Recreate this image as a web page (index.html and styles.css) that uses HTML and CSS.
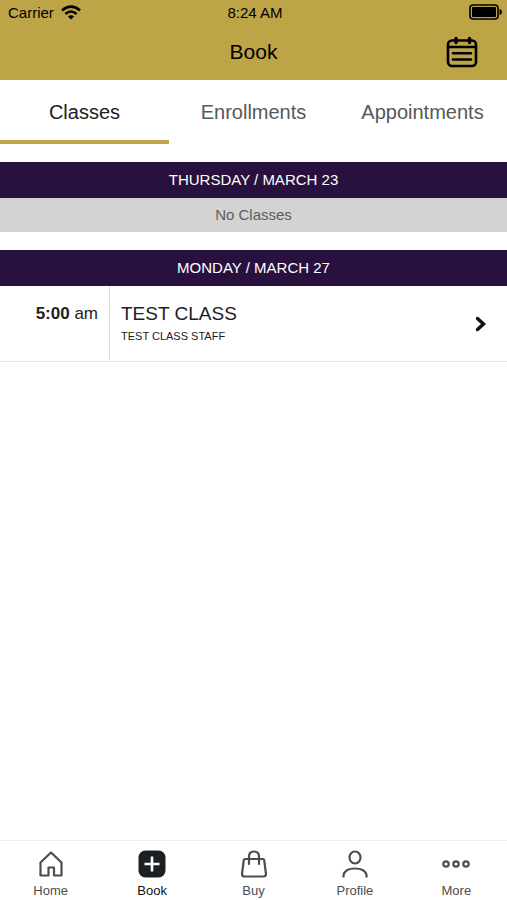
FILE: index.html
```html
<!DOCTYPE html>
<html lang="en">
<head>
    <meta charset="UTF-8">
    <meta name="viewport" content="width=device-width, initial-scale=1">
    <title>Book</title>
    <link rel="stylesheet" href="styles.css">
</head>
<body>
<header class="header">
    <div class="status-bar">
        <div class="status-left">
            <span>Carrier</span>
            <svg width="20" height="15" viewBox="0 0 20 15" fill="none" stroke="#000" stroke-width="2.6">
                <path d="M1 5.4 Q10 -2.2 19 5.4"/>
                <path d="M4.4 9 Q10 4 15.6 9"/>
                <path d="M10 14.6 L6.9 11.5 Q10 9 13.1 11.5 Z" fill="#000" stroke="none"/>
            </svg>
        </div>
        <span>8:24 AM</span>
        <div class="status-right">
            <svg width="33" height="16" viewBox="0 0 33 16">
                <rect x="1" y="1" width="28" height="14" rx="3" fill="none" stroke="#000" stroke-width="1.6"/>
                <rect x="3" y="3" width="24" height="10" rx="1" fill="#000"/>
                <path d="M30.5 5 Q33 5.5 33 8 Q33 10.5 30.5 11 Z" fill="#000"/>
            </svg>
        </div>
    </div>
    <div class="title-bar">
        <h1>Book</h1>
        <button type="button" class="calendar-btn" aria-label="Calendar">
            <svg width="32" height="32" viewBox="0 0 32 32" fill="none" stroke="#000" stroke-width="2.6" stroke-linecap="round">
                <rect x="2" y="4.5" width="28" height="25.5" rx="4"/>
                <path d="M2.5 11 H29.5 M7 17.3 H25 M7 23.5 H25"/>
                <path d="M10 2.5 V6.5 M23.5 2.5 V6.5" stroke-width="3.4"/>
            </svg>
        </button>
    </div>
</header>

<nav class="tabs">
    <a href="#classes" class="tab active">Classes</a>
    <a href="#enrollments" class="tab">Enrollments</a>
    <a href="#appointments" class="tab">Appointments</a>
</nav>

<main class="schedule">
    <section class="day">
        <h2 class="day-title">THURSDAY / MARCH 23</h2>
        <p class="day-empty">No Classes</p>
    </section>
    <section class="day">
        <h2 class="day-title">MONDAY / MARCH 27</h2>
        <a href="#class" class="class-row">
            <span class="class-time"><b>5:00</b> am</span>
            <span class="class-info">
                <span class="class-name">TEST CLASS</span>
                <span class="class-staff">TEST CLASS STAFF</span>
            </span>
            <svg class="arrow" width="12" height="16" viewBox="0 0 12 16" fill="none" stroke="#111" stroke-width="3.4" stroke-linecap="round">
                <path d="M2.5 2.5 L8.5 8 L2.5 13.5"/>
            </svg>
        </a>
    </section>
</main>

<nav class="bottom-nav">
    <a href="#home" class="nav-item">
        <svg width="28" height="28" viewBox="0 0 28 28" fill="none" stroke="#4a4d51" stroke-width="2.2" stroke-linejoin="round">
            <path d="M3.5 12.5 L14 2.5 L24.5 12.5 V25.5 H17 V17.5 H11.5 V25.5 H3.5 Z"/>
        </svg>
        <span>Home</span>
    </a>
    <a href="#book" class="nav-item active">
        <svg width="28" height="28" viewBox="0 0 28 28">
            <rect x="0.5" y="0.5" width="27" height="27" rx="7" fill="#1d2023"/>
            <path d="M14 6.5 V21.5 M6.5 14 H21.5" stroke="#fff" stroke-width="2.6"/>
        </svg>
        <span>Book</span>
    </a>
    <a href="#buy" class="nav-item">
        <svg width="28" height="28" viewBox="0 0 28 28" fill="none" stroke="#4a4d51" stroke-width="2.2" stroke-linecap="round" stroke-linejoin="round">
            <path d="M5 9 H23 Q24 9 24.2 10 L26 24 Q26 26.5 23.5 26.5 H4.5 Q2 26.5 2 24 L3.8 10 Q4 9 5 9 Z"/>
            <path d="M9 14 V6.5 Q9 1.5 14 1.5 Q19 1.5 19 6.5 V14"/>
        </svg>
        <span>Buy</span>
    </a>
    <a href="#profile" class="nav-item">
        <svg width="28" height="28" viewBox="0 0 28 28" fill="none" stroke="#4a4d51" stroke-width="2.2">
            <ellipse cx="14" cy="7.5" rx="5.5" ry="6"/>
            <path d="M2.5 27.5 V25 Q4 18.5 14 18.5 Q24 18.5 25.5 25 V27.5"/>
        </svg>
        <span>Profile</span>
    </a>
    <a href="#more" class="nav-item">
        <svg width="28" height="28" viewBox="0 0 28 28" fill="none" stroke="#4a4d51" stroke-width="2.2">
            <circle cx="4" cy="14" r="2.7"/>
            <circle cx="14" cy="14" r="2.7"/>
            <circle cx="24" cy="14" r="2.7"/>
        </svg>
        <span>More</span>
    </a>
</nav>
</body>
</html>
```
FILE: styles.css
```css
* {
    box-sizing: border-box;
}
body {
    margin: 0;
    min-height: 100vh;
    display: flex;
    flex-direction: column;
    background: #fff;
    color: #1d2023;
    font-family: "Liberation Sans", Arial, sans-serif;
}
h1, h2, p {
    margin: 0;
    font-weight: normal;
}
a {
    color: inherit;
    text-decoration: none;
}
svg {
    display: block;
}

/* header */
.header {
    background: #bda446;
    color: #000;
}
.status-bar {
    display: grid;
    grid-template-columns: 1fr auto 1fr;
    align-items: center;
    height: 24px;
    padding: 0 5px 0 8px;
    font-size: 15px;
}
.status-left {
    display: flex;
    align-items: center;
    gap: 7px;
}
.status-right {
    display: flex;
    justify-content: flex-end;
}
.title-bar {
    display: grid;
    grid-template-columns: 1fr auto 1fr;
    align-items: center;
    height: 56px;
    padding: 0 29px;
}
.title-bar h1 {
    grid-column: 2;
    font-size: 21px;
}
.calendar-btn {
    justify-self: end;
    padding: 0;
    border: 0;
    background: none;
    cursor: pointer;
}

/* tabs */
.tabs {
    display: flex;
}
.tab {
    flex: 1;
    border-bottom: 4px solid transparent;
    padding-top: 4px;
    line-height: 56px;
    text-align: center;
    font-size: 20px;
    color: #55585c;
}
.tab.active {
    border-color: #bda446;
    color: #1d2023;
}

/* schedule */
.schedule {
    flex: 1;
}
.day {
    margin-top: 18px;
}
.day-title {
    background: #28113e;
    color: #fff;
    line-height: 36px;
    text-align: center;
    font-size: 15px;
}
.day-empty {
    background: #d3d3d3;
    color: #5c5c5c;
    line-height: 34px;
    text-align: center;
    font-size: 15px;
}
.class-row {
    display: flex;
    padding-right: 20px;
    border-bottom: 1px solid #e8e8e8;
}
.class-time {
    width: 110px;
    padding: 16px 11px 0 0;
    border-right: 1px solid #dcdfe2;
    line-height: 24px;
    text-align: right;
    font-size: 17px;
}
.class-info {
    flex: 1;
    padding: 16px 0 15px 11px;
}
.class-name {
    display: block;
    line-height: 24px;
    font-size: 19px;
}
.class-staff {
    display: block;
    line-height: 20px;
    font-size: 11px;
}
.arrow {
    align-self: center;
}

/* bottom nav */
.bottom-nav {
    display: flex;
    border-top: 1px solid #ededed;
}
.nav-item {
    flex: 1;
    display: flex;
    flex-direction: column;
    align-items: center;
    gap: 4px;
    padding-top: 9px;
    line-height: 18px;
    font-size: 13px;
    color: #4a4d51;
}
.nav-item.active {
    color: #111;
}
```
